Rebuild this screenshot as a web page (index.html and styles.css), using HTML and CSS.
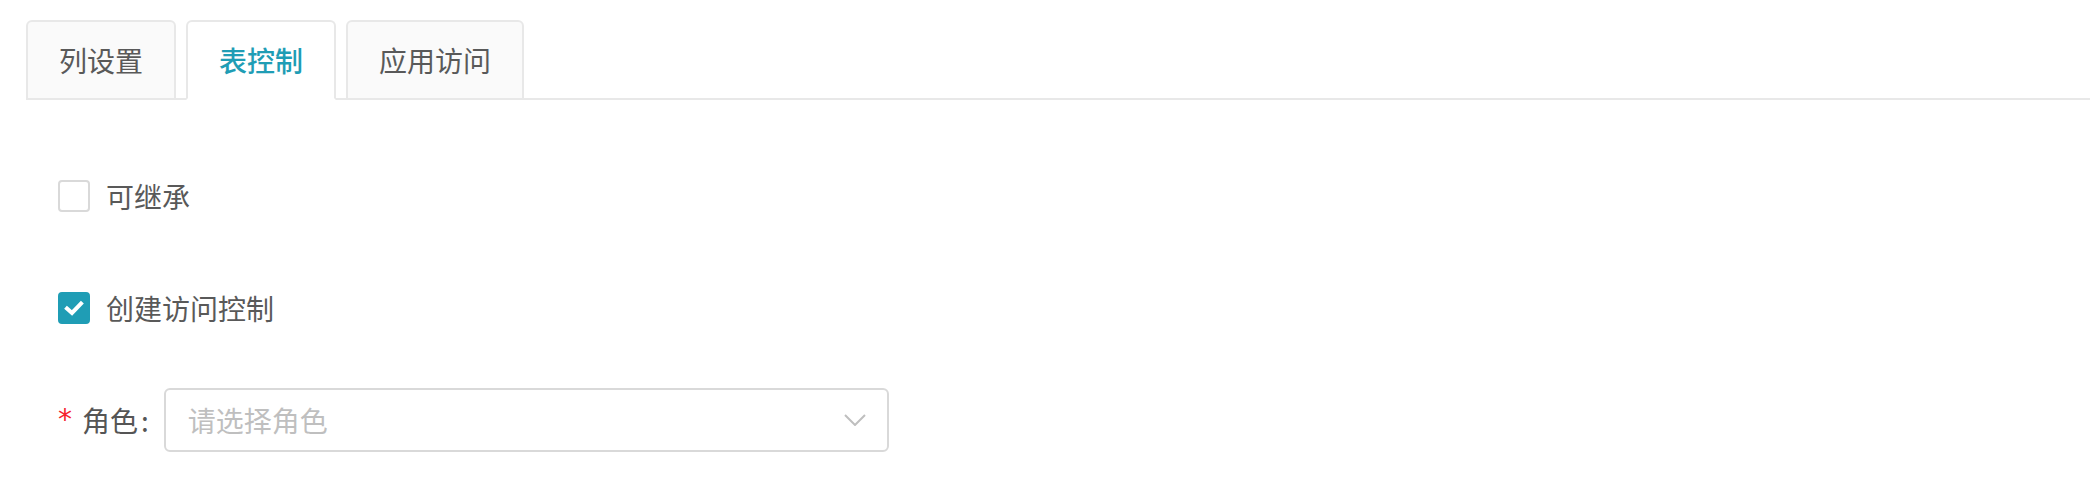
FILE: index.html
```html
<!DOCTYPE html>
<html lang="zh-CN">
<head>
<meta charset="utf-8">
<title>表控制</title>
<link rel="stylesheet" href="styles.css">
</head>
<body>
<div class="page">
  <div class="tabs-bar">
    <div class="tab">列设置</div>
    <div class="tab tab-active">表控制</div>
    <div class="tab">应用访问</div>
  </div>
  <div class="form">
    <div class="form-item">
      <label class="checkbox">
        <span class="checkbox-box"></span>
        <span class="checkbox-label">可继承</span>
      </label>
    </div>
    <div class="form-item">
      <label class="checkbox">
        <span class="checkbox-box checkbox-checked">
          <svg viewBox="0 0 32 32" width="32" height="32"><path d="M9 16.5 L14 21 L23 11.5" fill="none" stroke="#fff" stroke-width="4" stroke-linecap="square" stroke-linejoin="miter"/></svg>
        </span>
        <span class="checkbox-label">创建访问控制</span>
      </label>
    </div>
    <div class="form-item">
      <div class="form-label"><span class="required">*</span>角色<span class="colon">:</span></div>
      <div class="select">
        <span class="placeholder">请选择角色</span>
        <svg class="arrow" viewBox="0 0 22 12" width="22" height="12"><path d="M1 1 L11 11 L21 1" fill="none" stroke="#bfbfbf" stroke-width="2"/></svg>
      </div>
    </div>
  </div>
</div>
</body>
</html>
```

FILE: styles.css
```css
html, body {
  margin: 0;
  padding: 0;
  background: #fff;
}
body {
  font-family: "Noto Sans CJK SC", "Noto Sans", sans-serif;
  font-size: 28px;
  color: #595959;
}
.page {
  padding: 20px 2px 0 26px;
}
.tabs-bar {
  display: flex;
  align-items: flex-end;
  gap: 10px;
  border-bottom: 2px solid #e8e8e8;
}
.tab {
  box-sizing: border-box;
  height: 80px;
  padding: 0 31px;
  display: flex;
  align-items: center;
  background: #fafafa;
  border: 2px solid #e8e8e8;
  border-radius: 6px 6px 0 0;
  margin-bottom: -2px;
  color: #595959;
  line-height: 1;
}
.tab-active {
  background: #fff;
  border-bottom-color: #fff;
  color: #1f9db5;
  font-weight: 500;
}
.form {
  padding: 64px 0 0 32px;
}
.form-item {
  height: 64px;
  margin-bottom: 48px;
  display: flex;
  align-items: center;
}
.checkbox {
  display: flex;
  align-items: center;
}
.checkbox-box {
  box-sizing: border-box;
  width: 32px;
  height: 32px;
  border: 2px solid #d9d9d9;
  border-radius: 4px;
  background: #fff;
  display: flex;
}
.checkbox-checked {
  background: #1f9db5;
  border-color: #1f9db5;
}
.checkbox-checked svg {
  margin: -2px;
}
.checkbox-label {
  padding: 0 16px;
  line-height: 1;
}
.form-label {
  display: flex;
  align-items: center;
  color: #555;
  line-height: 1;
}
.required {
  color: #f5222d;
  font-family: "DejaVu Sans", sans-serif;
  font-size: 28px;
  margin-right: 10px;
}
.colon {
  margin: 0 15px 0 3px;
}
.select {
  box-sizing: border-box;
  width: 725px;
  height: 64px;
  border: 2px solid #d9d9d9;
  border-radius: 6px;
  display: flex;
  align-items: center;
  justify-content: space-between;
  padding: 0 21px 0 22px;
}
.placeholder {
  color: #bfbfbf;
  line-height: 1;
}
.arrow {
  display: block;
}
```
